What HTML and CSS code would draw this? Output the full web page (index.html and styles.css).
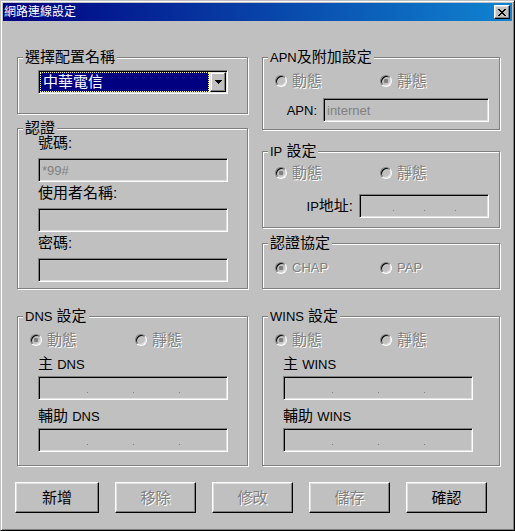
FILE: index.html
```html
<!DOCTYPE html>
<html lang="zh-Hant">
<head>
<meta charset="utf-8">
<title>網路連線設定</title>
<link rel="stylesheet" href="styles.css">
</head>
<body>
<div class="window">
  <div class="titlebar">
    <span class="title">網路連線設定</span>
    <span class="close"><svg width="8" height="7" viewBox="0 0 8 7" shape-rendering="crispEdges"><path fill="#000" d="M0 0h2v1H0z M6 0h2v1H6z M1 1h2v1H1z M5 1h2v1H5z M2 2h4v1H2z M3 3h2v1H3z M2 4h4v1H2z M1 5h2v1H1z M5 5h2v1H5z M0 6h2v1H0z M6 6h2v1H6z"/></svg></span>
  </div>
  <div class="client">
    <div class="cols top">
      <div class="col">
        <div class="group g-profile">
          <div class="legend">選擇配置名稱</div>
          <div class="combo">
            <div class="combo-sel"><span>中華電信</span></div>
            <div class="combo-btn"><svg width="7" height="4" viewBox="0 0 7 4" shape-rendering="crispEdges"><path fill="#000" d="M0 0h7v1H0z M1 1h5v1H1z M2 2h3v1H2z M3 3h1v1H3z"/></svg></div>
          </div>
        </div>
        <div class="group g-auth">
          <div class="legend">認證</div>
          <div class="stack-auth">
            <div class="lbl">號碼:</div>
            <div class="edit"><span class="en dim">*99#</span></div>
            <div class="lbl">使用者名稱:</div>
            <div class="edit"></div>
            <div class="lbl">密碼:</div>
            <div class="edit"></div>
          </div>
        </div>
      </div>
      <div class="col">
        <div class="group g-apn">
          <div class="legend"><span class="en">APN</span>及附加設定</div>
          <div class="radios">
            <span class="radio"><span class="rb"></span><span class="off">動態</span></span>
            <span class="radio"><span class="rb on"></span><span class="off">靜態</span></span>
          </div>
          <div class="row-right">
            <span class="rlbl"><span class="en">APN:</span></span>
            <div class="edit w-apn"><span class="en dim">internet</span></div>
          </div>
        </div>
        <div class="group g-ip">
          <div class="legend"><span class="en">IP</span> 設定</div>
          <div class="radios">
            <span class="radio"><span class="rb on"></span><span class="off">動態</span></span>
            <span class="radio"><span class="rb"></span><span class="off">靜態</span></span>
          </div>
          <div class="row-right">
            <span class="rlbl"><span class="en">IP</span>地址:</span>
            <div class="edit ip w-ip"><i class="seg"></i><i class="dot"></i><i class="seg"></i><i class="dot"></i><i class="seg"></i><i class="dot"></i><i class="seg"></i></div>
          </div>
        </div>
        <div class="group g-proto">
          <div class="legend">認證協定</div>
          <div class="radios">
            <span class="radio"><span class="rb on"></span><span class="off en">CHAP</span></span>
            <span class="radio"><span class="rb"></span><span class="off en">PAP</span></span>
          </div>
        </div>
      </div>
    </div>
    <div class="cols bottom">
      <div class="group g-dns">
        <div class="legend"><span class="en">DNS</span> 設定</div>
        <div class="radios">
          <span class="radio"><span class="rb on"></span><span class="off">動態</span></span>
          <span class="radio"><span class="rb"></span><span class="off">靜態</span></span>
        </div>
        <div class="stack-addr">
          <div class="lbl">主 <span class="en">DNS</span></div>
          <div class="edit ip"><i class="seg"></i><i class="dot"></i><i class="seg"></i><i class="dot"></i><i class="seg"></i><i class="dot"></i><i class="seg"></i></div>
          <div class="lbl">輔助 <span class="en">DNS</span></div>
          <div class="edit ip"><i class="seg"></i><i class="dot"></i><i class="seg"></i><i class="dot"></i><i class="seg"></i><i class="dot"></i><i class="seg"></i></div>
        </div>
      </div>
      <div class="group g-wins">
        <div class="legend"><span class="en">WINS</span> 設定</div>
        <div class="radios">
          <span class="radio"><span class="rb on"></span><span class="off">動態</span></span>
          <span class="radio"><span class="rb"></span><span class="off">靜態</span></span>
        </div>
        <div class="stack-addr">
          <div class="lbl">主 <span class="en">WINS</span></div>
          <div class="edit ip"><i class="seg"></i><i class="dot"></i><i class="seg"></i><i class="dot"></i><i class="seg"></i><i class="dot"></i><i class="seg"></i></div>
          <div class="lbl">輔助 <span class="en">WINS</span></div>
          <div class="edit ip"><i class="seg"></i><i class="dot"></i><i class="seg"></i><i class="dot"></i><i class="seg"></i><i class="dot"></i><i class="seg"></i></div>
        </div>
      </div>
    </div>
    <div class="buttons">
      <button class="btn">新增</button>
      <button class="btn" disabled>移除</button>
      <button class="btn" disabled>修改</button>
      <button class="btn" disabled>儲存</button>
      <button class="btn">確認</button>
    </div>
  </div>
</div>
</body>
</html>
```

FILE: styles.css
```css
html, body {
  margin: 0;
  padding: 0;
  background: #c0c0c0;
  overflow: hidden;
}
body {
  font-family: "Liberation Sans", "Noto Sans CJK TC", sans-serif;
  font-size: 15px;
  line-height: 16px;
  color: #000;
}
.window {
  width: 515px;
  height: 531px;
  box-sizing: border-box;
  background: #c0c0c0;
  border: 1px solid;
  border-color: #c0c0c0 #000 #000 #c0c0c0;
  box-shadow: inset 1px 1px 0 #fff, inset -1px -1px 0 #808080;
  padding: 2px;
  display: flex;
  flex-direction: column;
}
.titlebar {
  height: 18px;
  flex: none;
  background: linear-gradient(90deg, #000080, #1084d0);
  display: flex;
  align-items: center;
  justify-content: space-between;
  padding: 0 2px 0 1px;
  color: #fff;
  font-size: 12px;
  line-height: 14px;
}
.close {
  width: 16px;
  height: 14px;
  box-sizing: border-box;
  background: #c0c0c0;
  border: 1px solid;
  border-color: #fff #000 #000 #fff;
  box-shadow: inset -1px -1px 0 #808080, inset 1px 1px 0 #dfdfdf;
  display: flex;
  align-items: center;
  justify-content: center;
}
.close svg { display: block; }
.client {
  flex: 1;
  padding: 36px 0 0 12px;
}
.cols {
  display: flex;
  gap: 14px;
  margin-left: 2px;
}
.col {
  display: flex;
  flex-direction: column;
}
.col:first-child { width: 231px; }
.col:last-child { width: 238px; }
.group {
  box-sizing: border-box;
  border: 1px solid #808080;
  box-shadow: inset 1px 1px 0 #fff, 1px 1px 0 #fff;
}
.legend {
  width: fit-content;
  margin: -9px 0 0 5px;
  padding: 0 2px;
  background: #c0c0c0;
  height: 16px;
  line-height: 16px;
  white-space: nowrap;
}
.en { font-size: 13px; }
.g-profile { height: 57px; }
.g-auth { height: 161px; margin-top: 14px; }
.g-apn { height: 73px; }
.g-ip { height: 77px; margin-top: 21px; }
.g-proto { height: 46px; margin-top: 15px; }
.bottom { margin-top: 27px; }
.g-dns { width: 231px; height: 150px; }
.g-wins { width: 238px; height: 150px; }

.combo {
  width: 190px;
  height: 24px;
  margin: 5px 0 0 20px;
  box-sizing: border-box;
  border: 1px solid;
  border-color: #808080 #fff #fff #808080;
  box-shadow: inset 1px 1px 0 #000, inset -1px -1px 0 #dfdfdf;
  background: #fff;
  padding: 1px;
  display: flex;
}
.combo-sel {
  flex: 1;
  background: #000080;
  color: #fff;
  box-sizing: border-box;
  border: 1px dotted #ffff80;
  padding-left: 2px;
  line-height: 18px;
  margin-right: 1px;
}
.combo-btn {
  width: 16px;
  box-sizing: border-box;
  background: #c0c0c0;
  border: 1px solid;
  border-color: #dfdfdf #000 #000 #dfdfdf;
  box-shadow: inset -1px -1px 0 #808080, inset 1px 1px 0 #fff;
  display: flex;
  align-items: center;
  justify-content: center;
}
.combo-btn svg { display: block; }

.lbl {
  height: 16px;
  margin-left: 20px;
  white-space: nowrap;
}
.edit {
  width: 190px;
  height: 24px;
  box-sizing: border-box;
  margin-left: 20px;
  border: 1px solid;
  border-color: #808080 #fff #fff #808080;
  box-shadow: inset 1px 1px 0 #000, inset -1px -1px 0 #dfdfdf;
  background: #c0c0c0;
  padding: 0 3px;
  line-height: 22px;
}
.dim { color: #808080; }
.ip {
  display: flex;
  padding: 0 2px 0 3px;
}
.ip .seg { flex: 1; }
.ip .dot {
  width: 1px;
  height: 1px;
  margin-top: 15px;
  background: #808080;
}
.stack-auth { margin-top: -1px; }
.stack-auth .lbl { margin-top: 3px; }
.stack-auth .lbl:first-child { margin-top: 0; }
.stack-auth .edit { margin-top: 7px; }
.stack-addr .lbl { margin-top: 8px; }
.stack-addr .edit { margin-top: 4px; }

.radios {
  display: flex;
  height: 16px;
  margin-top: 8px;
  padding-left: 12px;
}
.g-ip .radios { margin-top: 6px; }
.g-proto .radios { margin-top: 9px; }
.radio {
  width: 105px;
  display: flex;
  align-items: center;
  gap: 5px;
}
.rb {
  width: 12px;
  height: 12px;
  box-sizing: border-box;
  border-radius: 50%;
  border: 1px solid;
  border-color: #808080 #fff #fff #808080;
  box-shadow: inset 1px 1px 0 #000, inset -1px -1px 0 #dfdfdf;
  background: #c0c0c0;
  display: flex;
  align-items: center;
  justify-content: center;
  flex: none;
}
.rb.on::after {
  content: "";
  width: 4px;
  height: 4px;
  border-radius: 1px;
  background: #808080;
}
.off {
  color: #808080;
  text-shadow: 1px 1px 0 #fff;
}
.row-right {
  display: flex;
  justify-content: flex-end;
  align-items: center;
  gap: 6px;
  padding-right: 10px;
}
.row-right .edit { margin-left: 0; }
.g-apn .row-right { margin-top: 9px; }
.g-ip .row-right { margin-top: 13px; }
.w-apn { width: 166px; }
.w-ip { width: 130px; }

.buttons {
  display: grid;
  grid-template-columns: 84px repeat(4, 81px);
  column-gap: 16px;
  margin-top: 16px;
}
.btn {
  height: 31px;
  box-sizing: border-box;
  margin: 0;
  padding: 0;
  font: inherit;
  color: #000;
  background: #c0c0c0;
  border: 1px solid;
  border-color: #fff #000 #000 #fff;
  box-shadow: inset -1px -1px 0 #808080, inset 1px 1px 0 #dfdfdf;
  display: flex;
  align-items: center;
  justify-content: center;
}
.btn:disabled {
  color: #808080;
  text-shadow: 1px 1px 0 #fff;
}
```
